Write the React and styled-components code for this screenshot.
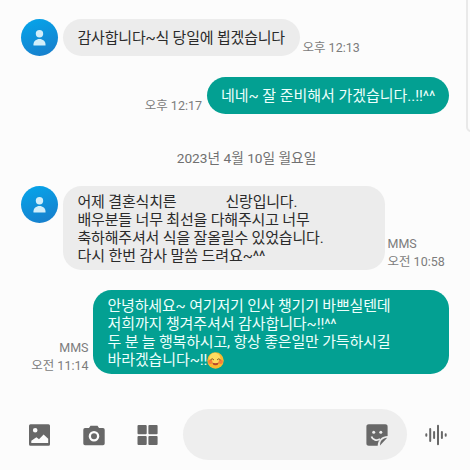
import React from "react";
import styled, { createGlobalStyle } from "styled-components";

const GlobalStyle = createGlobalStyle`
  * {
    box-sizing: border-box;
  }

  body {
    margin: 0;
    background: #fcfcfc;
    font-family: Roboto, "Noto Sans CJK KR", sans-serif;
  }
`;

const Screen = styled.div`
  position: relative;
  width: 470px;
  height: 470px;
  display: flex;
  flex-direction: column;
  overflow: hidden;
  background: #fcfcfc;
`;

const EdgePanel = styled.div`
  position: absolute;
  top: -10px;
  right: -16px;
  width: 20px;
  height: 142px;
  border: 2px solid #e9e9e9;
  border-radius: 5px;
`;

const Thread = styled.main`
  height: 399px;
  padding: 19px 21px 0;
`;

const Row = styled.div`
  display: flex;
  justify-content: ${(props) => (props.$sent ? "flex-end" : "flex-start")};
  margin-top: ${(props) => props.$gap || 0}px;
`;

const Avatar = styled.div`
  flex: none;
  width: 37px;
  height: 37px;
  margin-right: 5px;
  border-radius: 50%;
  background: linear-gradient(160deg, #08a0e6 15%, #1780cd 90%);
`;

const Bubble = styled.div`
  flex: none;
  width: ${(props) => props.$width}px;
  padding: 7px 0 5px 14.5px;
  border-radius: 18.5px;
  background: #ececec;
  color: #2b2b2b;
  font-size: 15px;
  line-height: 18px;
`;

const SentBubble = styled(Bubble)`
  background: #03a092;
  color: #edfffc;
`;

const Line = styled.div`
  height: 18px;
  white-space: pre;
  letter-spacing: ${(props) => props.$spacing || -0.18}px;
`;

const SingleLine = styled(Line)`
  height: 25px;
  line-height: 25px;
`;

const Meta = styled.div`
  align-self: flex-end;
  margin: ${(props) => (props.$sent ? "0 4.5px -1px 0" : "0 0 -1px 2.5px")};
  color: #7c7c7c;
  font-size: 12.5px;
  line-height: 18px;
  text-align: ${(props) => (props.$sent ? "right" : "left")};
  white-space: nowrap;
`;

const DateLabel = styled.div`
  height: 20px;
  margin: 34px 0 0 37px;
  padding-right: 14px;
  color: #707070;
  font-size: 13.7px;
  line-height: 20px;
  text-align: center;
`;

const BlankName = styled.span`
  display: inline-block;
  width: 49px;
`;

const Emoji = styled.svg`
  width: 17px;
  height: 17px;
  vertical-align: -4px;
`;

const Composer = styled.footer`
  display: flex;
  align-items: center;
  height: 71px;
  padding: 0 22px 0 28px;
`;

const Tool = styled.button`
  display: flex;
  width: 24px;
  height: 24px;
  margin-right: 30px;
  padding: 0;
  border: none;
  background: none;
  color: #686868;
`;

const StickerTool = styled(Tool)`
  margin-right: 18px;
`;

const VoiceTool = styled(Tool)`
  margin: 0 0 0 17px;
`;

const Input = styled.div`
  display: flex;
  align-items: center;
  justify-content: flex-end;
  width: 224px;
  height: 51px;
  margin-left: -7px;
  border-radius: 26px;
  background: #eeeeee;
`;

const Icon = ({ children }) => (
  <svg width="24" height="24" viewBox="0 0 24 24" fill="currentColor">
    {children}
  </svg>
);

const Person = () => (
  <Avatar>
    <svg width="37" height="37" viewBox="0 0 37 37" fill="#d2eefa">
      <circle cx="18.5" cy="14.7" r="3.7" />
      <path d="M12.5 26.5v-1.2c0-3 2.6-5.3 6-5.3s6 2.3 6 5.3v1.2z" />
    </svg>
  </Avatar>
);

const SmilingFace = () => (
  <Emoji viewBox="0 0 17 17" fill="none">
    <circle cx="8.5" cy="8.5" r="8.2" fill="#f9b92f" />
    <circle cx="7.8" cy="6.4" r="5.6" fill="#ffdb60" />
    <circle cx="3.3" cy="9.8" r="2.2" fill="#f8803a" />
    <circle cx="13.7" cy="9.8" r="2.2" fill="#f8803a" />
    <path
      d="M3.7 7.6q1.5-2 3 0M10.3 7.6q1.5-2 3 0"
      stroke="#8a531c"
      strokeLinecap="round"
    />
    <path
      d="M5 10.6q3.5 1.2 7 0q-.8 2.7-3.5 2.7t-3.5-2.7"
      fill="#b9452b"
    />
  </Emoji>
);

const App = () => (
  <Screen>
    <GlobalStyle />
    <EdgePanel />
    <Thread>
      <Row>
        <Person />
        <Bubble $width={237}>
          <SingleLine $spacing={-0.2}>감사합니다~식 당일에 뵙겠습니다</SingleLine>
        </Bubble>
        <Meta>오후 12:13</Meta>
      </Row>
      <Row $sent $gap={21}>
        <Meta $sent>오후 12:17</Meta>
        <SentBubble $width={242.5}>
          <SingleLine $spacing={-0.04}>네네~ 잘 준비해서 가겠습니다..!!^^</SingleLine>
        </SentBubble>
      </Row>
      <DateLabel>2023년 4월 10일 월요일</DateLabel>
      <Row $gap={18}>
        <Person />
        <Bubble $width={322}>
          <Line>
            어제 결혼식치른
            <BlankName />
            신랑입니다.
          </Line>
          <Line>배우분들 너무 최선을 다해주시고 너무</Line>
          <Line>축하해주셔서 식을 잘올릴수 있었습니다.</Line>
          <Line $spacing={-0.1}>다시 한번 감사 말씀 드려요~^^</Line>
        </Bubble>
        <Meta>
          MMS
          <br />
          오전 10:58
        </Meta>
      </Row>
      <Row $sent $gap={20}>
        <Meta $sent>
          MMS
          <br />
          오전 11:14
        </Meta>
        <SentBubble $width={356}>
          <Line>안녕하세요~ 여기저기 인사 챙기기 바쁘실텐데</Line>
          <Line $spacing={-0.1}>저희까지 챙겨주셔서 감사합니다~!!^^</Line>
          <Line>두 분 늘 행복하시고, 항상 좋은일만 가득하시길</Line>
          <Line $spacing={-0.1}>
            바라겠습니다~!!
            <SmilingFace />
          </Line>
        </SentBubble>
      </Row>
    </Thread>
    <Composer>
      <Tool aria-label="Gallery">
        <Icon>
          <path
            fillRule="evenodd"
            d="M2.5 1.3h18a1.5 1.5 0 0 1 1.5 1.5v18.4a1.5 1.5 0 0 1-1.5 1.5h-18a1.5 1.5 0 0 1-1.5-1.5V2.8a1.5 1.5 0 0 1 1.5-1.5zM7.2 5a2.3 2.3 0 1 0 0 4.6 2.3 2.3 0 0 0 0-4.6zM3.3 20h16.9v-4.2l-4.6-4.4-4.6 4.8-2.6-2-5.1 3.6z"
          />
        </Icon>
      </Tool>
      <Tool aria-label="Camera">
        <Icon>
          <path
            fillRule="evenodd"
            d="M8.5 2.8h7L17 5h4a1.7 1.7 0 0 1 1.7 1.7v13.8A1.7 1.7 0 0 1 21 22.2H3a1.7 1.7 0 0 1-1.7-1.7V6.7A1.7 1.7 0 0 1 3 5h4zM12 8a5.3 5.3 0 1 0 0 10.6A5.3 5.3 0 0 0 12 8zm0 2.3a3 3 0 1 1 0 6 3 3 0 0 1 0-6z"
          />
        </Icon>
      </Tool>
      <Tool aria-label="More">
        <Icon>
          <rect x="1.5" y="2" width="9.2" height="9.2" rx="1" />
          <rect x="12.4" y="2" width="9.2" height="9.2" rx="1" />
          <rect x="1.5" y="12.9" width="9.2" height="9.2" rx="1" />
          <rect x="12.4" y="12.9" width="9.2" height="9.2" rx="1" />
        </Icon>
      </Tool>
      <Input>
        <StickerTool aria-label="Sticker">
          <Icon>
            <path d="M4 1.3h16A2.5 2.5 0 0 1 22.6 4v9c-5.5 0-9.8 4-9.9 9.7H4A2.5 2.5 0 0 1 1.4 20V4A2.5 2.5 0 0 1 4 1.3z" />
            <path d="M15 22.5c0-4.6 2.5-7.3 7.2-7.7z" />
            <circle cx="8.7" cy="9.3" r="1.5" fill="#eee" />
            <circle cx="15.8" cy="9.3" r="1.5" fill="#eee" />
            <path
              d="M6.5 13.5c1 3.6 5.5 4.8 8.5 2.4"
              fill="none"
              stroke="#eee"
              strokeWidth="1.8"
            />
          </Icon>
        </StickerTool>
      </Input>
      <VoiceTool aria-label="Voice">
        <Icon>
          <path
            d="M2.3 11.3v1.4M6.2 6v12M10.1 9v6M14 2.8v18.4M17.9 9v6M21.7 11.3v1.4"
            stroke="currentColor"
            strokeWidth="2"
            strokeLinecap="round"
          />
        </Icon>
      </VoiceTool>
    </Composer>
  </Screen>
);

export default App;
